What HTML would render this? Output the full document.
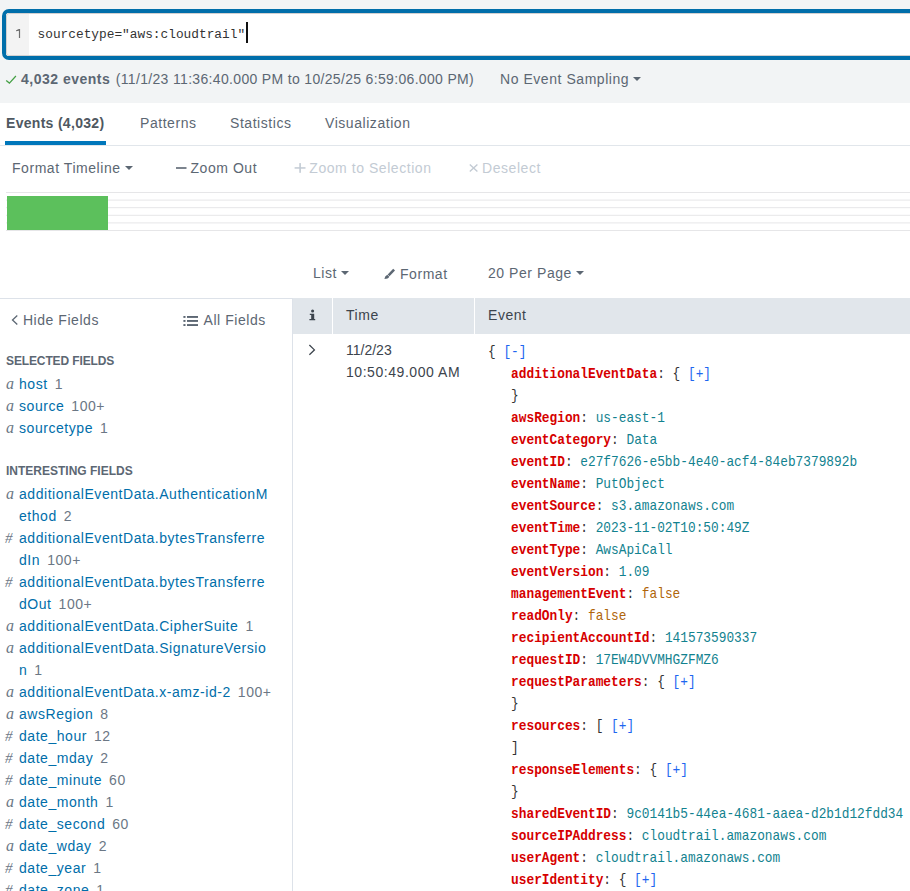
<!DOCTYPE html>
<html><head><meta charset="utf-8">
<style>
*{margin:0;padding:0;box-sizing:border-box}
html,body{width:910px;height:891px;overflow:hidden;background:#fff}
body{position:relative;font-family:"Liberation Sans",sans-serif;color:#5c6773;font-size:14px;letter-spacing:0.55px}
.a{position:absolute;white-space:nowrap;line-height:16px}
.mono{font-family:"Liberation Mono",monospace;letter-spacing:0}
#top{position:absolute;left:0;top:0;width:910px;height:103px;background:#f2f4f5}
#sbox{position:absolute;left:2px;top:9px;width:1000px;height:51px;border:4px solid #006eaa;border-radius:7px;background:#fff;overflow:hidden}
#gutter{position:absolute;left:0;top:0;width:23px;height:100%;background:#f3f3f3}
.caret{display:inline-block;width:0;height:0;border-left:4px solid transparent;border-right:4px solid transparent;border-top:4px solid #5c6773;vertical-align:middle;margin-left:4px;position:relative;top:-1px}
.tab{position:absolute;top:115px;line-height:16px;white-space:nowrap;color:#5c6773}
.tline{position:absolute;left:6px;width:904px;height:1px;background:#e6e9eb}
#side{position:absolute;left:0;top:298px;width:293px;height:600px;border-top:1px solid #dde2e9;border-right:1px solid #dde2e9}
.hdr{position:absolute;top:298px;height:36px;background:#e1e6eb}
#fields{position:absolute;left:0;top:351px;width:292px;line-height:22px;font-size:14px}
#fields .h{font-size:12px;font-weight:bold;letter-spacing:-0.12px;padding-left:6px;color:#5c6773;position:relative;top:-1px}
#fields .r{position:relative;padding-left:19px;color:#006eaa;white-space:nowrap}
#fields .r i{position:absolute;left:6px;top:0;font-family:"Liberation Serif",serif;font-size:16px;color:#6b7785;letter-spacing:0}
#fields .r i.n{font-size:15px;left:5px}
#fields .r s{text-decoration:none;color:#6b7785;margin-left:7px}
#ev{position:absolute;left:488px;top:341px;font-family:"Liberation Mono",monospace;font-size:12.82px;letter-spacing:0;color:#333}
.el{position:absolute;left:0;white-space:pre;line-height:19.643px;height:19.643px;transform:scaleY(1.12);transform-origin:0 0}
.k{color:#d60000;font-weight:bold;-webkit-text-stroke:0}
.v{color:#12828f}
.l{color:#1e66f0}
.bo{color:#b0650a}
</style></head><body>
<div id="top"></div>
<div id="sbox"><div id="gutter"></div>
<svg class="a" style="left:-6px;top:-13px" width="30" height="40"><path d="M18.9,29 H20.1 V38 H18.9 V30.7 L16.1,31.3 V30.3 Z" fill="#6e6e6e"/></svg>
<div class="a mono" style="left:31.5px;top:14px;font-size:12.82px;color:#333">sourcetype="aws:cloudtrail"</div>
<div class="a" style="left:240px;top:9px;width:2px;height:21px;background:#111"></div>
<div style="position:absolute;left:0;top:0;right:0;bottom:0;border:1px solid #d2d0d0;border-radius:3px"></div>
</div>
<svg class="a" style="left:0;top:70px" width="20" height="20"><polyline points="6.2,10.4 9.4,13.1 15.9,6" fill="none" stroke="#45a045" stroke-width="1.25"/></svg>
<div class="a" style="left:21px;top:71px;font-size:14px;color:#5c6773"><b style="letter-spacing:0.5px">4,032 events</b> <span style="letter-spacing:0.33px;margin-left:1px">(11/1/23 11:36:40.000 PM to 10/25/25 6:59:06.000 PM)</span></div>
<div class="a" style="left:500px;top:71px;color:#5c6773">No Event Sampling<span class="caret"></span></div>

<div class="tab" style="left:6px;color:#4f5861;font-weight:bold;letter-spacing:0.3px">Events (4,032)</div>
<div class="tab" style="left:140px">Patterns</div>
<div class="tab" style="left:230px">Statistics</div>
<div class="tab" style="left:325px">Visualization</div>
<div class="a" style="left:5px;top:141px;width:101px;height:4px;background:#0077bb"></div>
<div class="a" style="left:0;top:145px;width:910px;height:1px;background:#e1e6eb"></div>

<div class="a" style="left:12px;top:160px">Format Timeline<span class="caret"></span></div>
<svg class="a" style="left:0;top:150px" width="560" height="30">
<rect x="176" y="17.2" width="10.5" height="1.6" fill="#5c6773"/>
<rect x="294.6" y="17.2" width="10.9" height="1.5" fill="#c3cbd4"/><rect x="299.3" y="13.1" width="1.6" height="9.7" fill="#c3cbd4"/>
<path d="M469.8,14.4 L477.4,21.5 M477.4,14.4 L469.8,21.5" stroke="#c3cbd4" stroke-width="1.4" fill="none"/>
</svg>
<div class="a" style="left:190.5px;top:160px">Zoom Out</div>
<div class="a" style="left:309.3px;top:160px;color:#c3cbd4">Zoom to Selection</div>
<div class="a" style="left:482px;top:160px;color:#c3cbd4">Deselect</div>

<svg class="a" style="left:0;top:180px" width="910" height="60">
<g stroke="#e6e6e8" stroke-width="1">
<line x1="6" x2="910" y1="12.5" y2="12.5"/><line x1="6" x2="910" y1="20.1" y2="20.1"/><line x1="6" x2="910" y1="27.7" y2="27.7"/>
<line x1="6" x2="910" y1="35.3" y2="35.3"/><line x1="6" x2="910" y1="42.9" y2="42.9"/><line x1="6" x2="910" y1="50.5" y2="50.5"/>
</g></svg>
<div class="a" style="left:7px;top:196px;width:101px;height:34px;background:#5cc05c"></div>

<div class="a" style="left:313px;top:265px">List<span class="caret"></span></div>
<svg class="a" style="left:380px;top:265px" width="20" height="18"><polygon points="13.2,3.8 15,5.6 9.5,11.2 7.7,9.4" fill="#5c6773"/><path d="M7.3,9.8 L9.3,11.8 Q8.2,14 4.4,14 Q4.6,11 7.3,9.8Z" fill="#5c6773"/></svg>
<div class="a" style="left:400px;top:266px">Format</div>
<div class="a" style="left:488px;top:265px">20 Per Page<span class="caret"></span></div>

<div id="side"></div>
<svg class="a" style="left:0;top:305px" width="210" height="30">
<polyline points="17.3,10.5 12.5,15 17.3,19.5" fill="none" stroke="#5c6773" stroke-width="1.3"/>
<rect x="183.4" y="11" width="2.1" height="1.9" fill="#5c6773"/><rect x="187" y="11" width="11" height="1.9" fill="#5c6773"/>
<rect x="183.4" y="15" width="2.1" height="1.9" fill="#5c6773"/><rect x="187" y="15" width="11" height="1.9" fill="#5c6773"/>
<rect x="183.4" y="19.1" width="2.1" height="1.9" fill="#5c6773"/><rect x="187" y="19.1" width="11" height="1.9" fill="#5c6773"/>
</svg>
<div class="a" style="left:22.9px;top:312px">Hide Fields</div>
<div class="a" style="left:203.5px;top:312px">All Fields</div>

<div id="fields">
<div class="h">SELECTED FIELDS</div>
<div class="r"><i>a</i>host<s>1</s></div>
<div class="r"><i>a</i>source<s>100+</s></div>
<div class="r"><i>a</i>sourcetype<s>1</s></div>
<div class="r">&nbsp;</div>
<div class="h" style="letter-spacing:0">INTERESTING FIELDS</div>
<div class="r"><i>a</i>additionalEventData.AuthenticationM<br>ethod<s>2</s></div>
<div class="r"><i class="n">#</i>additionalEventData.bytesTransferre<br>dIn<s>100+</s></div>
<div class="r"><i class="n">#</i>additionalEventData.bytesTransferre<br>dOut<s>100+</s></div>
<div class="r"><i>a</i>additionalEventData.CipherSuite<s>1</s></div>
<div class="r"><i>a</i>additionalEventData.SignatureVersio<br>n<s>1</s></div>
<div class="r"><i>a</i>additionalEventData.x-amz-id-2<s>100+</s></div>
<div class="r"><i>a</i>awsRegion<s>8</s></div>
<div class="r"><i class="n">#</i>date_hour<s>12</s></div>
<div class="r"><i class="n">#</i>date_mday<s>2</s></div>
<div class="r"><i class="n">#</i>date_minute<s>60</s></div>
<div class="r"><i>a</i>date_month<s>1</s></div>
<div class="r"><i class="n">#</i>date_second<s>60</s></div>
<div class="r"><i>a</i>date_wday<s>2</s></div>
<div class="r"><i class="n">#</i>date_year<s>1</s></div>
<div class="r"><i class="n">#</i>date_zone<s>1</s></div>
</div>

<div class="hdr" style="left:293px;width:39px"></div>
<div class="hdr" style="left:333px;width:141px"></div>
<div class="hdr" style="left:475px;width:435px"></div>
<svg class="a" style="left:300px;top:300px" width="30" height="30"><circle cx="12.6" cy="11" r="1.55" fill="#3c444d"/>
<path d="M9.8,13.7 H14.2 V19.1 H15.2 V20.3 H9.4 V19.1 H11.2 V14.9 H9.8Z" fill="#3c444d"/></svg>
<div class="a" style="left:346px;top:307px;color:#3c444d">Time</div>
<div class="a" style="left:488px;top:307px;color:#3c444d">Event</div>
<svg class="a" style="left:300px;top:338px" width="25" height="25"><polyline points="9.4,7 14.4,11.9 9.4,16.8" fill="none" stroke="#3c444d" stroke-width="1.3"/></svg>
<div class="a" style="left:346px;top:342px;color:#3c444d;letter-spacing:0">11/2/23</div>
<div class="a" style="left:346px;top:364px;color:#3c444d">10:50:49.000 AM</div>

<div id="ev">
<div class="el" style="top:0px">{ <span class="l">[-]</span></div>
<div class="el" style="top:22px">   <span class="k">additionalEventData</span>: { <span class="l">[+]</span></div>
<div class="el" style="top:44px">   }</div>
<div class="el" style="top:66px">   <span class="k">awsRegion</span>: <span class="v">us-east-1</span></div>
<div class="el" style="top:88px">   <span class="k">eventCategory</span>: <span class="v">Data</span></div>
<div class="el" style="top:110px">   <span class="k">eventID</span>: <span class="v">e27f7626-e5bb-4e40-acf4-84eb7379892b</span></div>
<div class="el" style="top:132px">   <span class="k">eventName</span>: <span class="v">PutObject</span></div>
<div class="el" style="top:154px">   <span class="k">eventSource</span>: <span class="v">s3.amazonaws.com</span></div>
<div class="el" style="top:176px">   <span class="k">eventTime</span>: <span class="v">2023-11-02T10:50:49Z</span></div>
<div class="el" style="top:198px">   <span class="k">eventType</span>: <span class="v">AwsApiCall</span></div>
<div class="el" style="top:220px">   <span class="k">eventVersion</span>: <span class="v">1.09</span></div>
<div class="el" style="top:242px">   <span class="k">managementEvent</span>: <span class="bo">false</span></div>
<div class="el" style="top:264px">   <span class="k">readOnly</span>: <span class="bo">false</span></div>
<div class="el" style="top:286px">   <span class="k">recipientAccountId</span>: <span class="v">141573590337</span></div>
<div class="el" style="top:308px">   <span class="k">requestID</span>: <span class="v">17EW4DVVMHGZFMZ6</span></div>
<div class="el" style="top:330px">   <span class="k">requestParameters</span>: { <span class="l">[+]</span></div>
<div class="el" style="top:352px">   }</div>
<div class="el" style="top:374px">   <span class="k">resources</span>: [ <span class="l">[+]</span></div>
<div class="el" style="top:396px">   ]</div>
<div class="el" style="top:418px">   <span class="k">responseElements</span>: { <span class="l">[+]</span></div>
<div class="el" style="top:440px">   }</div>
<div class="el" style="top:462px">   <span class="k">sharedEventID</span>: <span class="v">9c0141b5-44ea-4681-aaea-d2b1d12fdd34</span></div>
<div class="el" style="top:484px">   <span class="k">sourceIPAddress</span>: <span class="v">cloudtrail.amazonaws.com</span></div>
<div class="el" style="top:506px">   <span class="k">userAgent</span>: <span class="v">cloudtrail.amazonaws.com</span></div>
<div class="el" style="top:528px">   <span class="k">userIdentity</span>: { <span class="l">[+]</span></div>
</div>
</body></html>
